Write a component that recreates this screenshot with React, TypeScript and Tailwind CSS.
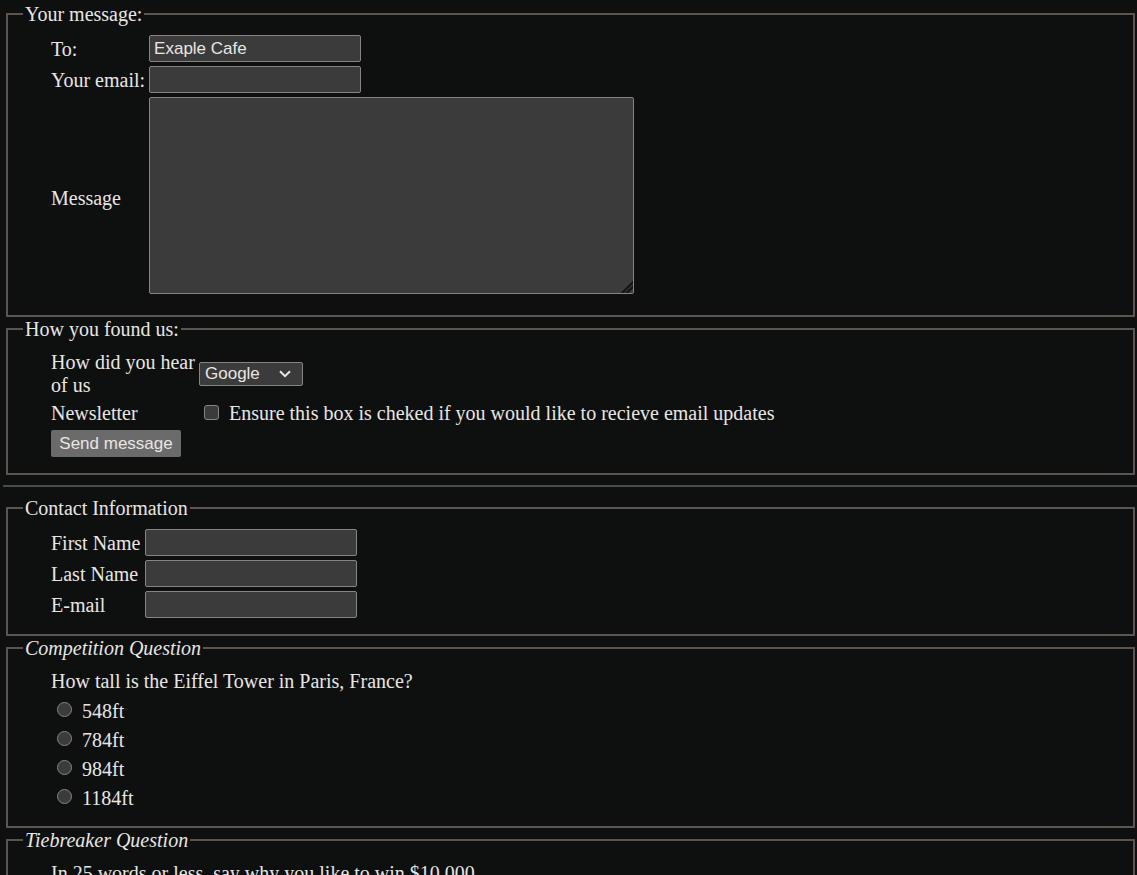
import type { ReactNode } from 'react';

const fieldClass =
  'h-[27px] w-[212px] rounded-[2px] border border-[#858585] bg-[#3b3b3b] px-1 font-[Liberation_Sans,sans-serif] text-[17px] text-[#e8e6e3] outline-none focus:border-white';

function Section({ title, italic = false, children }: { title: string; italic?: boolean; children: ReactNode }) {
  return (
    <fieldset className="mr-[2px] ml-[3px] border-2 border-[#5b554f] px-[15px] pt-[9px] pb-4">
      <legend className={italic ? 'px-[2px] italic' : 'px-[2px]'}>{title}</legend>
      <div className="pl-7">{children}</div>
    </fieldset>
  );
}

function TextField({ id, label, type = 'text', value }: { id: string; label: string; type?: string; value?: string }) {
  return (
    <>
      <label htmlFor={id}>{label}</label>
      <input id={id} name={id} type={type} defaultValue={value} className={fieldClass} />
    </>
  );
}

const heights = ['548ft', '784ft', '984ft', '1184ft'];

export default function App() {
  return (
    <main className="h-screen overflow-hidden bg-[#0e100f] pt-[2px] pl-[3px] font-[Liberation_Serif,serif] text-[20px] leading-[24px] text-[#e8e6e3]">
      <form onSubmit={(e) => e.preventDefault()}>
        <Section title="Your message:">
          <div className="grid grid-cols-[auto_1fr] items-center gap-1">
            <TextField id="to" label="To:" value="Exaple Cafe" />
            <TextField id="sender" label="Your email:" type="email" />
            <label htmlFor="message">Message</label>
            <div className="pb-[5px]">
              <textarea
                id="message"
                name="message"
                className="block h-[197px] w-[485px] max-w-full resize rounded-[2px] border border-[#858585] bg-[#3b3b3b] p-1 font-[Liberation_Sans,sans-serif] text-[17px] outline-none focus:border-white [&::-webkit-resizer]:bg-[linear-gradient(135deg,transparent_58%,#161616_58%,#161616_68%,#2c2c2c_68%,#2c2c2c_74%,#161616_74%,#161616_84%,#3b3b3b_84%)]"
              />
            </div>
          </div>
        </Section>

        <Section title="How you found us:">
          <div className="grid grid-cols-[148px_1fr] items-center gap-y-[5px] pt-px leading-[23px]">
            <label htmlFor="source">How did you hear of us</label>
            <div className="grid w-[104px] grid-cols-1 items-center">
              <select
                id="source"
                name="source"
                className="col-start-1 row-start-1 h-[24px] appearance-none rounded-[2px] border border-[#858585] bg-[#3b3b3b] px-[5px] font-[Liberation_Sans,sans-serif] text-[17px] leading-[20px]"
              >
                <option>Google</option>
              </select>
              <svg
                viewBox="0 0 12 8"
                className="pointer-events-none col-start-1 row-start-1 mr-3 h-2 w-3 justify-self-end"
                fill="none"
                stroke="#e8e6e3"
                strokeWidth="2"
                aria-hidden="true"
              >
                <path d="M1 1.2 6 6.2 11 1.2" />
              </svg>
            </div>
            <span>Newsletter</span>
            <label className="flex items-center gap-[10px] pl-[5px]">
              <input
                type="checkbox"
                name="newsletter"
                className="mb-[2px] size-[15px] shrink-0 appearance-none rounded-[3px] border border-[#858585] bg-[#3b3b3b] checked:bg-[#9a9a9a]"
              />
              Ensure this box is cheked if you would like to recieve email updates
            </label>
            <button
              type="submit"
              className="h-[27px] w-[130px] rounded-[2px] bg-[#6b6b6b] font-[Liberation_Sans,sans-serif] text-[17px]"
            >
              Send message
            </button>
          </div>
        </Section>
      </form>

      <hr className="mt-[10px] mb-[9px] border-t-2 border-[#494b4c]" />

      <form onSubmit={(e) => e.preventDefault()}>
        <Section title="Contact Information">
          <div className="grid grid-cols-[auto_1fr] items-center gap-x-[5px] gap-y-1">
            <TextField id="first" label="First Name" />
            <TextField id="last" label="Last Name" />
            <TextField id="email" label="E-mail" type="email" />
          </div>
        </Section>

        <Section title="Competition Question" italic>
          <p>How tall is the Eiffel Tower in Paris, France?</p>
          <div className="flex flex-col items-start gap-[5px] pt-[6px]">
            {heights.map((height) => (
              <label key={height} className="flex items-center gap-[10px] pl-[6px]">
                <input
                  type="radio"
                  name="height"
                  value={height}
                  className="mb-1 size-[15px] shrink-0 appearance-none rounded-full border border-[#858585] bg-[#3b3b3b] checked:bg-[#9a9a9a]"
                />
                {height}
              </label>
            ))}
          </div>
        </Section>

        <Section title="Tiebreaker Question" italic>
          <p>In 25 words or less, say why you like to win $10,000</p>
        </Section>
      </form>
    </main>
  );
}
